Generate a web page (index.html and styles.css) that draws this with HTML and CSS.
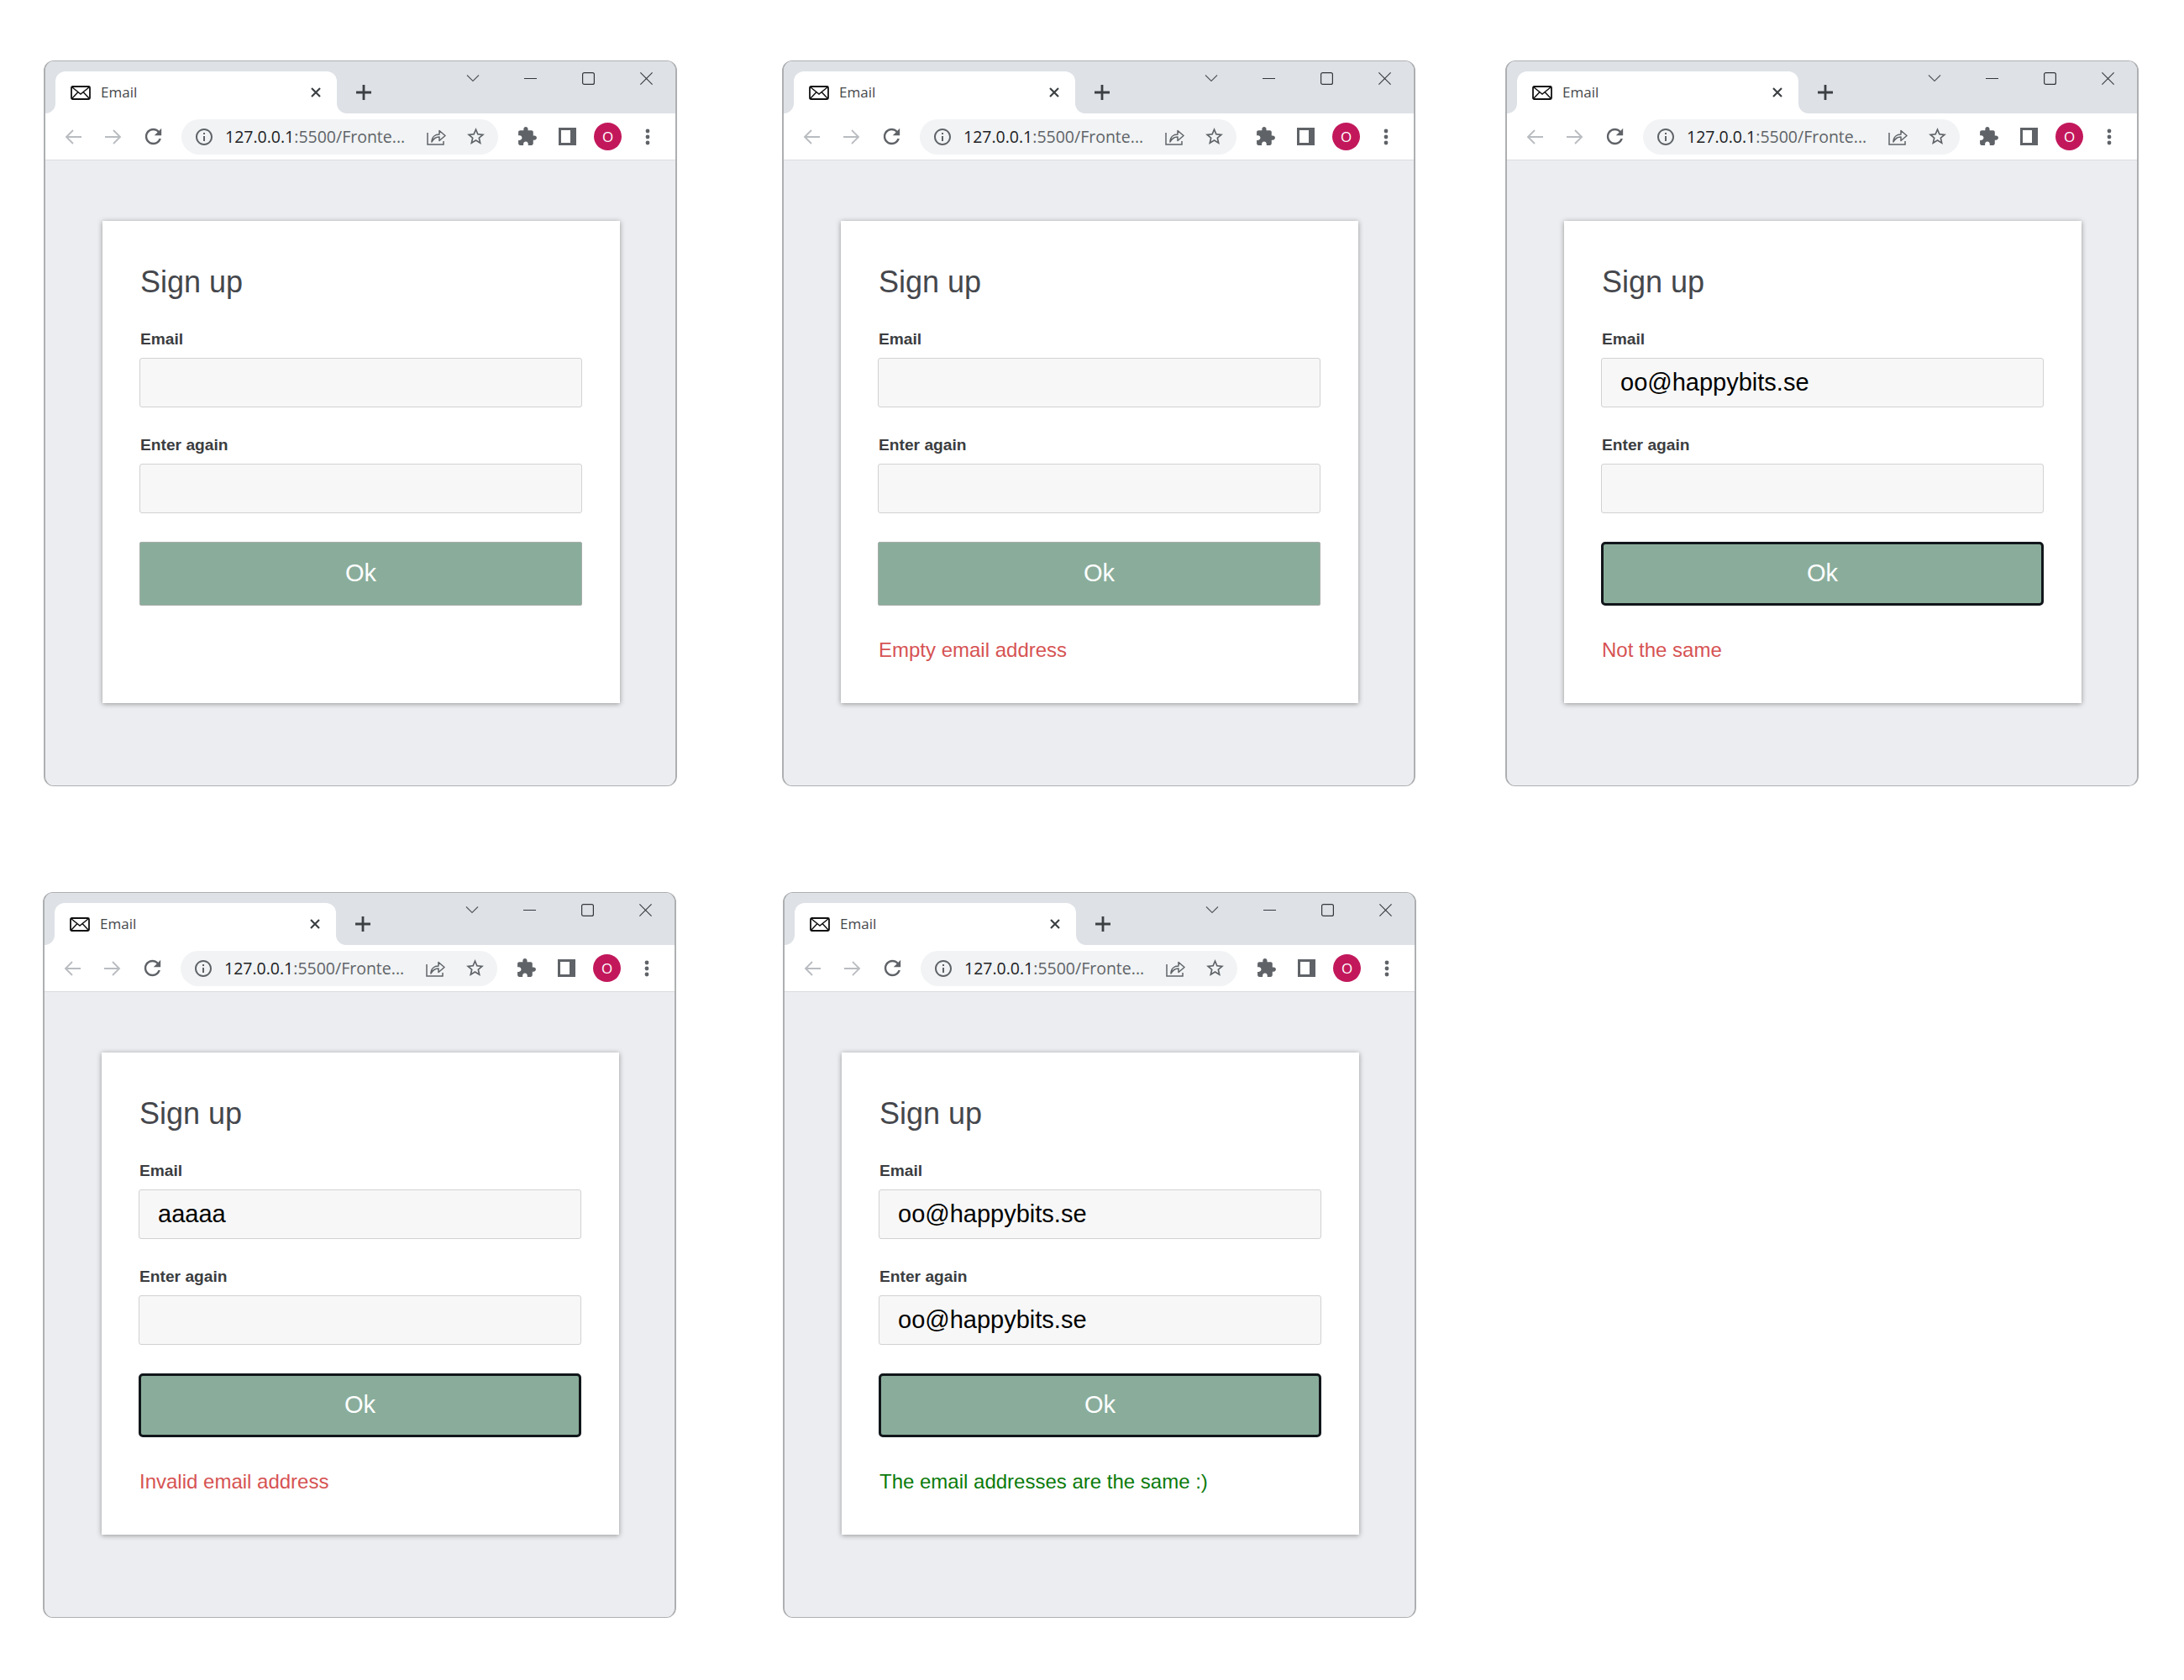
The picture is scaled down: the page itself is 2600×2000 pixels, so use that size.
FILE: index.html
```html
<!DOCTYPE html>
<html lang="en">
<head>
<meta charset="utf-8">
<title>Sign up states</title>
<link rel="stylesheet" href="styles.css">
</head>
<body>
<svg class="defs" aria-hidden="true">
  <symbol id="i-mail" viewBox="0 0 24 17"><rect x="1" y="1" width="22" height="15" rx="1.5" fill="none" stroke="currentColor" stroke-width="1.8"/><path d="M1.5 1.5 12 10 22.5 1.5M1.5 15.5 9 7.500M22.5 15.5 15 7.500" fill="none" stroke="currentColor" stroke-width="1.5"/></symbol>
  <symbol id="i-x" viewBox="0 0 12 12"><path d="M1 1 11 11M11 1 1 11" fill="none" stroke="currentColor" stroke-width="2.2"/></symbol>
  <symbol id="i-plus" viewBox="0 0 20 20"><path d="M10 1V19M1 10H19" fill="none" stroke="currentColor" stroke-width="2.8"/></symbol>
  <symbol id="i-chev" viewBox="0 0 16 15"><path d="M1 3.500 8 10.500 15 3.500" fill="none" stroke="currentColor" stroke-width="1.1"/></symbol>
  <symbol id="i-min" viewBox="0 0 15 15"><path d="M0 7.500H15" fill="none" stroke="currentColor" stroke-width="1.2"/></symbol>
  <symbol id="i-max" viewBox="0 0 15 15"><rect x=".6" y=".6" width="13.800" height="13.800" rx="2" fill="none" stroke="currentColor" stroke-width="1.2"/></symbol>
  <symbol id="i-close" viewBox="0 0 15 15"><path d="M.4.4 14.600 14.600M14.600.4.4 14.600" fill="none" stroke="currentColor" stroke-width="1.1"/></symbol>
  <symbol id="i-back" viewBox="0 0 20 20"><path d="M20 10H2M10 2 2 10l8 8" fill="none" stroke="currentColor" stroke-width="1.9"/></symbol>
  <symbol id="i-fwd" viewBox="0 0 20 20"><path d="M0 10H18M10 2l8 8-8 8" fill="none" stroke="currentColor" stroke-width="1.9"/></symbol>
  <symbol id="i-reload" viewBox="0 0 24 24"><path fill="currentColor" d="M17.650 6.350C16.200 4.900 14.210 4 12 4c-4.420 0-7.990 3.580-7.990 8s3.570 8 7.990 8c3.730 0 6.840-2.550 7.730-6h-2.080c-.82 2.330-3.040 4-5.650 4-3.310 0-6-2.690-6-6s2.690-6 6-6c1.660 0 3.140.69 4.220 1.780L13 11h7V4l-2.350 2.350z"/></symbol>
  <symbol id="i-info" viewBox="0 0 24 24"><path fill="currentColor" d="M11 7h2v2h-2zm0 4h2v6h-2zm1-9C6.480 2 2 6.480 2 12s4.480 10 10 10 10-4.480 10-10S17.520 2 12 2zm0 18c-4.410 0-8-3.590-8-8s3.590-8 8-8 8 3.590 8 8-3.590 8-8 8z"/></symbol>
  <symbol id="i-share" viewBox="0 0 23 21"><path d="M1 6V20H20V16" fill="none" stroke="currentColor" stroke-width="1.500"/><path d="M6 17C6 11 10 8 15 8V3.500L22 9.500 15 15.500V11C11 11 8 13 6 17Z" fill="none" stroke="currentColor" stroke-width="1.500" stroke-linejoin="round"/></symbol>
  <symbol id="i-star" viewBox="0 0 24 24"><path fill="currentColor" d="M22 9.240l-7.190-.62L12 2 9.190 8.630 2 9.240l5.460 4.730L5.820 21 12 17.270 18.180 21l-1.630-7.030L22 9.240zM12 15.400l-3.760 2.270 1-4.280-3.320-2.880 4.380-.38L12 6.100l1.710 4.040 4.380.38-3.320 2.880 1 4.280L12 15.400z"/></symbol>
  <symbol id="i-ext" viewBox="0 0 24 24"><path fill="currentColor" d="M20.500 11H19V7c0-1.100-.9-2-2-2h-4V3.500C13 2.120 11.880 1 10.500 1S8 2.120 8 3.500V5H4c-1.100 0-1.990.9-1.990 2v3.800H3.500c1.490 0 2.700 1.210 2.700 2.700s-1.210 2.700-2.700 2.700H2V20c0 1.100.9 2 2 2h3.800v-1.500c0-1.490 1.210-2.700 2.700-2.700 1.490 0 2.700 1.210 2.700 2.700V22H17c1.100 0 2-.9 2-2v-4h1.500c1.380 0 2.500-1.120 2.500-2.500S21.880 11 20.500 11z"/></symbol>
  <symbol id="i-panel" viewBox="0 0 21 21"><path fill="currentColor" fill-rule="evenodd" d="M0 0H21V21H0ZM3 3V18H14V3Z"/></symbol>
  <symbol id="i-dots" viewBox="0 0 6 20"><circle cx="3" cy="3" r="2.400" fill="currentColor"/><circle cx="3" cy="10" r="2.400" fill="currentColor"/><circle cx="3" cy="17" r="2.400" fill="currentColor"/></symbol>
</svg>

<main class="desktop">
  <div class="row row-top">

    <section class="window">
      <div class="strip">
        <div class="tab"><svg class="ic-mail"><use href="#i-mail"/></svg><span class="tab-title">Email</span><svg class="ic-x"><use href="#i-x"/></svg></div>
        <svg class="ic-plus"><use href="#i-plus"/></svg>
        <svg class="ctl ctl-chev"><use href="#i-chev"/></svg>
        <svg class="ctl ctl-next"><use href="#i-min"/></svg>
        <svg class="ctl ctl-next"><use href="#i-max"/></svg>
        <svg class="ctl ctl-next"><use href="#i-close"/></svg>
      </div>
      <div class="toolbar">
        <svg class="ic-nav"><use href="#i-back"/></svg>
        <svg class="ic-nav ic-gap"><use href="#i-fwd"/></svg>
        <svg class="ic-reload"><use href="#i-reload"/></svg>
        <div class="omni"><svg class="ic-info"><use href="#i-info"/></svg><span class="url">127.0.0.1<span class="url-dim">:5500/Fronte...</span></span><svg class="ic-share"><use href="#i-share"/></svg><svg class="ic-star"><use href="#i-star"/></svg></div>
        <svg class="ic-ext"><use href="#i-ext"/></svg>
        <svg class="ic-panel"><use href="#i-panel"/></svg>
        <div class="avatar">O</div>
        <svg class="ic-dots"><use href="#i-dots"/></svg>
      </div>
      <div class="page">
        <form class="card">
          <h1 class="title">Sign up</h1>
          <div class="label label-first">Email</div>
          <div class="field"></div>
          <div class="label">Enter again</div>
          <div class="field"></div>
          <div class="btn">Ok</div>
          <p class="msg"></p>
        </form>
      </div>
    </section>

    <section class="window win-2">
      <div class="strip">
        <div class="tab"><svg class="ic-mail"><use href="#i-mail"/></svg><span class="tab-title">Email</span><svg class="ic-x"><use href="#i-x"/></svg></div>
        <svg class="ic-plus"><use href="#i-plus"/></svg>
        <svg class="ctl ctl-chev"><use href="#i-chev"/></svg>
        <svg class="ctl ctl-next"><use href="#i-min"/></svg>
        <svg class="ctl ctl-next"><use href="#i-max"/></svg>
        <svg class="ctl ctl-next"><use href="#i-close"/></svg>
      </div>
      <div class="toolbar">
        <svg class="ic-nav"><use href="#i-back"/></svg>
        <svg class="ic-nav ic-gap"><use href="#i-fwd"/></svg>
        <svg class="ic-reload"><use href="#i-reload"/></svg>
        <div class="omni"><svg class="ic-info"><use href="#i-info"/></svg><span class="url">127.0.0.1<span class="url-dim">:5500/Fronte...</span></span><svg class="ic-share"><use href="#i-share"/></svg><svg class="ic-star"><use href="#i-star"/></svg></div>
        <svg class="ic-ext"><use href="#i-ext"/></svg>
        <svg class="ic-panel"><use href="#i-panel"/></svg>
        <div class="avatar">O</div>
        <svg class="ic-dots"><use href="#i-dots"/></svg>
      </div>
      <div class="page">
        <form class="card">
          <h1 class="title">Sign up</h1>
          <div class="label label-first">Email</div>
          <div class="field"></div>
          <div class="label">Enter again</div>
          <div class="field"></div>
          <div class="btn">Ok</div>
          <p class="msg msg-err">Empty email address</p>
        </form>
      </div>
    </section>

    <section class="window win-3">
      <div class="strip">
        <div class="tab"><svg class="ic-mail"><use href="#i-mail"/></svg><span class="tab-title">Email</span><svg class="ic-x"><use href="#i-x"/></svg></div>
        <svg class="ic-plus"><use href="#i-plus"/></svg>
        <svg class="ctl ctl-chev"><use href="#i-chev"/></svg>
        <svg class="ctl ctl-next"><use href="#i-min"/></svg>
        <svg class="ctl ctl-next"><use href="#i-max"/></svg>
        <svg class="ctl ctl-next"><use href="#i-close"/></svg>
      </div>
      <div class="toolbar">
        <svg class="ic-nav"><use href="#i-back"/></svg>
        <svg class="ic-nav ic-gap"><use href="#i-fwd"/></svg>
        <svg class="ic-reload"><use href="#i-reload"/></svg>
        <div class="omni"><svg class="ic-info"><use href="#i-info"/></svg><span class="url">127.0.0.1<span class="url-dim">:5500/Fronte...</span></span><svg class="ic-share"><use href="#i-share"/></svg><svg class="ic-star"><use href="#i-star"/></svg></div>
        <svg class="ic-ext"><use href="#i-ext"/></svg>
        <svg class="ic-panel"><use href="#i-panel"/></svg>
        <div class="avatar">O</div>
        <svg class="ic-dots"><use href="#i-dots"/></svg>
      </div>
      <div class="page">
        <form class="card">
          <h1 class="title">Sign up</h1>
          <div class="label label-first">Email</div>
          <div class="field">oo@happybits.se</div>
          <div class="label">Enter again</div>
          <div class="field"></div>
          <div class="btn btn-focus">Ok</div>
          <p class="msg msg-err">Not the same</p>
        </form>
      </div>
    </section>

  </div>
  <div class="row row-bottom">

    <section class="window">
      <div class="strip">
        <div class="tab"><svg class="ic-mail"><use href="#i-mail"/></svg><span class="tab-title">Email</span><svg class="ic-x"><use href="#i-x"/></svg></div>
        <svg class="ic-plus"><use href="#i-plus"/></svg>
        <svg class="ctl ctl-chev"><use href="#i-chev"/></svg>
        <svg class="ctl ctl-next"><use href="#i-min"/></svg>
        <svg class="ctl ctl-next"><use href="#i-max"/></svg>
        <svg class="ctl ctl-next"><use href="#i-close"/></svg>
      </div>
      <div class="toolbar">
        <svg class="ic-nav"><use href="#i-back"/></svg>
        <svg class="ic-nav ic-gap"><use href="#i-fwd"/></svg>
        <svg class="ic-reload"><use href="#i-reload"/></svg>
        <div class="omni"><svg class="ic-info"><use href="#i-info"/></svg><span class="url">127.0.0.1<span class="url-dim">:5500/Fronte...</span></span><svg class="ic-share"><use href="#i-share"/></svg><svg class="ic-star"><use href="#i-star"/></svg></div>
        <svg class="ic-ext"><use href="#i-ext"/></svg>
        <svg class="ic-panel"><use href="#i-panel"/></svg>
        <div class="avatar">O</div>
        <svg class="ic-dots"><use href="#i-dots"/></svg>
      </div>
      <div class="page">
        <form class="card">
          <h1 class="title">Sign up</h1>
          <div class="label label-first">Email</div>
          <div class="field">aaaaa</div>
          <div class="label">Enter again</div>
          <div class="field"></div>
          <div class="btn btn-focus">Ok</div>
          <p class="msg msg-err">Invalid email address</p>
        </form>
      </div>
    </section>

    <section class="window win-5">
      <div class="strip">
        <div class="tab"><svg class="ic-mail"><use href="#i-mail"/></svg><span class="tab-title">Email</span><svg class="ic-x"><use href="#i-x"/></svg></div>
        <svg class="ic-plus"><use href="#i-plus"/></svg>
        <svg class="ctl ctl-chev"><use href="#i-chev"/></svg>
        <svg class="ctl ctl-next"><use href="#i-min"/></svg>
        <svg class="ctl ctl-next"><use href="#i-max"/></svg>
        <svg class="ctl ctl-next"><use href="#i-close"/></svg>
      </div>
      <div class="toolbar">
        <svg class="ic-nav"><use href="#i-back"/></svg>
        <svg class="ic-nav ic-gap"><use href="#i-fwd"/></svg>
        <svg class="ic-reload"><use href="#i-reload"/></svg>
        <div class="omni"><svg class="ic-info"><use href="#i-info"/></svg><span class="url">127.0.0.1<span class="url-dim">:5500/Fronte...</span></span><svg class="ic-share"><use href="#i-share"/></svg><svg class="ic-star"><use href="#i-star"/></svg></div>
        <svg class="ic-ext"><use href="#i-ext"/></svg>
        <svg class="ic-panel"><use href="#i-panel"/></svg>
        <div class="avatar">O</div>
        <svg class="ic-dots"><use href="#i-dots"/></svg>
      </div>
      <div class="page">
        <form class="card">
          <h1 class="title">Sign up</h1>
          <div class="label label-first">Email</div>
          <div class="field">oo@happybits.se</div>
          <div class="label">Enter again</div>
          <div class="field">oo@happybits.se</div>
          <div class="btn btn-focus">Ok</div>
          <p class="msg msg-ok">The email addresses are the same :)</p>
        </form>
      </div>
    </section>

  </div>
</main>
</body>
</html>
```

FILE: styles.css
```css
* { box-sizing: border-box; }

html, body { margin: 0; background: #fff; }

.defs { position: absolute; width: 0; height: 0; overflow: hidden; }

.desktop { width: 2600px; height: 2000px; font-family: "Liberation Sans", Arial, sans-serif; }

.row { display: flex; }
.row-top { padding: 72px 0 0 52px; }
.row-bottom { padding: 126px 0 0 51px; }

.window {
  width: 754px;
  height: 864px;
  display: flex;
  flex-direction: column;
  overflow: hidden;
  flex: none;
  background: #ecedf0;
  border: solid #adafb1;
  border-width: 1px 2px;
  border-radius: 12px;
}
.win-2 { margin-left: 125px; }
.win-3 { margin-left: 107px; }
.win-5 { margin-left: 127px; }

/* tab strip */
.strip {
  display: flex;
  align-items: flex-start;
  flex: none;
  height: 62px;
  padding-left: 12px;
  background: #dee1e6;
  color: #3c4043;
}
.tab {
  position: relative;
  display: flex;
  align-items: center;
  flex: none;
  width: 335px;
  height: 50px;
  margin-top: 12px;
  padding: 0 18px;
  background: #fff;
  border-radius: 12px 12px 0 0;
}
.tab::before, .tab::after {
  content: "";
  position: absolute;
  bottom: 0;
  width: 12px;
  height: 12px;
}
.tab::before { left: -12px; background: radial-gradient(circle at 0 0, #dee1e6 11.5px, #fff 12.5px); }
.tab::after { right: -12px; background: radial-gradient(circle at 100% 0, #dee1e6 11.5px, #fff 12.5px); }

.ic-mail { width: 24px; height: 17px; color: #111; flex: none; }
.tab-title {
  margin-left: 12px;
  font: 17px/20px "Open Sans", "Liberation Sans", sans-serif;
  color: #45474b;
}
.ic-x { width: 12px; height: 12px; margin-left: auto; margin-right: 1px; flex: none; color: #3c4043; }
.ic-plus { width: 20px; height: 20px; margin: 27px 0 0 22px; flex: none; }

.ctl { width: 15px; height: 15px; margin-top: 13px; flex: none; color: #34373a; }
.ctl-chev { width: 16px; margin-left: 112px; color: #55585c; }
.ctl-next { margin-left: 54px; }
.ctl-chev + .ctl-next { margin-left: 53px; }

/* toolbar */
.toolbar {
  display: flex;
  align-items: center;
  flex: none;
  height: 56px;
  padding-left: 23px;
  background: #fff;
  border-bottom: 1px solid #dadce0;
}
.ic-nav { width: 20px; height: 20px; flex: none; color: #b9bcc0; }
.ic-gap { margin-left: 28px; }
.ic-reload { width: 29px; height: 29px; margin-left: 23px; flex: none; color: #5f6368; }
.omni {
  display: flex;
  align-items: center;
  flex: none;
  width: 377px;
  height: 42px;
  margin-left: 19px;
  padding: 0 14px 0 15px;
  background: #f1f3f4;
  border-radius: 21px;
}
.ic-info { width: 24px; height: 24px; flex: none; color: #5f6368; }
.url {
  margin-left: 13px;
  font: 19.500px/24px "Open Sans", "Liberation Sans", sans-serif;
  color: #202124;
  white-space: nowrap;
}
.url-dim { color: #5f6368; }
.ic-share { width: 23px; height: 21px; margin-left: auto; flex: none; color: #5f6368; }
.ic-star { width: 25px; height: 25px; margin-left: 23px; flex: none; color: #5f6368; }
.ic-ext { width: 25px; height: 25px; margin-left: 22px; flex: none; color: #5f6368; }
.ic-panel { width: 21px; height: 21px; margin-left: 25px; flex: none; color: #5f6368; }
.avatar {
  display: flex;
  align-items: center;
  justify-content: center;
  flex: none;
  width: 33px;
  height: 33px;
  margin-left: 21px;
  border-radius: 50%;
  background: #c2185b;
  color: #fff;
  font: 17px/20px "Open Sans", "Liberation Sans", sans-serif;
}
.ic-dots { width: 6px; height: 20px; margin-left: 28px; flex: none; color: #5f6368; }

/* page */
.page { flex: 1; padding: 72px 66px 0 68px; background: #ecedf0; }

.card {
  width: 616px;
  height: 574px;
  padding: 53px 45px 0 45px;
  background: #fff;
  box-shadow: 0 1px 6px rgba(0, 0, 0, .38);
}
.title {
  margin: 0;
  font-size: 36px;
  font-weight: 400;
  line-height: 40px;
  color: #45474c;
}
.label {
  margin: 34px 0 11px;
  font-size: 19.200px;
  font-weight: 700;
  line-height: 22px;
  color: #3b3d40;
}
.label-first { margin-top: 37px; }
.field {
  height: 59px;
  margin-left: -1px;
  padding: 0 22px;
  background: #f7f7f7;
  border: 1px solid #d2d2d2;
  border-radius: 3px;
  font-size: 29px;
  line-height: 57px;
  color: #000;
}
.btn {
  height: 76px;
  margin-top: 34px;
  margin-left: -1px;
  background: #8aad9b;
  border: 1px solid #a7aca9;
  border-radius: 2px;
  font-size: 29px;
  line-height: 72px;
  text-align: center;
  color: #fff;
}
.btn-focus { border: 3px solid #11161a; border-radius: 5px; line-height: 68px; }
.msg { margin: 39px 0 0; font-size: 24px; line-height: 28px; }
.msg-err { color: #d65353; }
.msg-ok { color: #0b7b0b; }
```
